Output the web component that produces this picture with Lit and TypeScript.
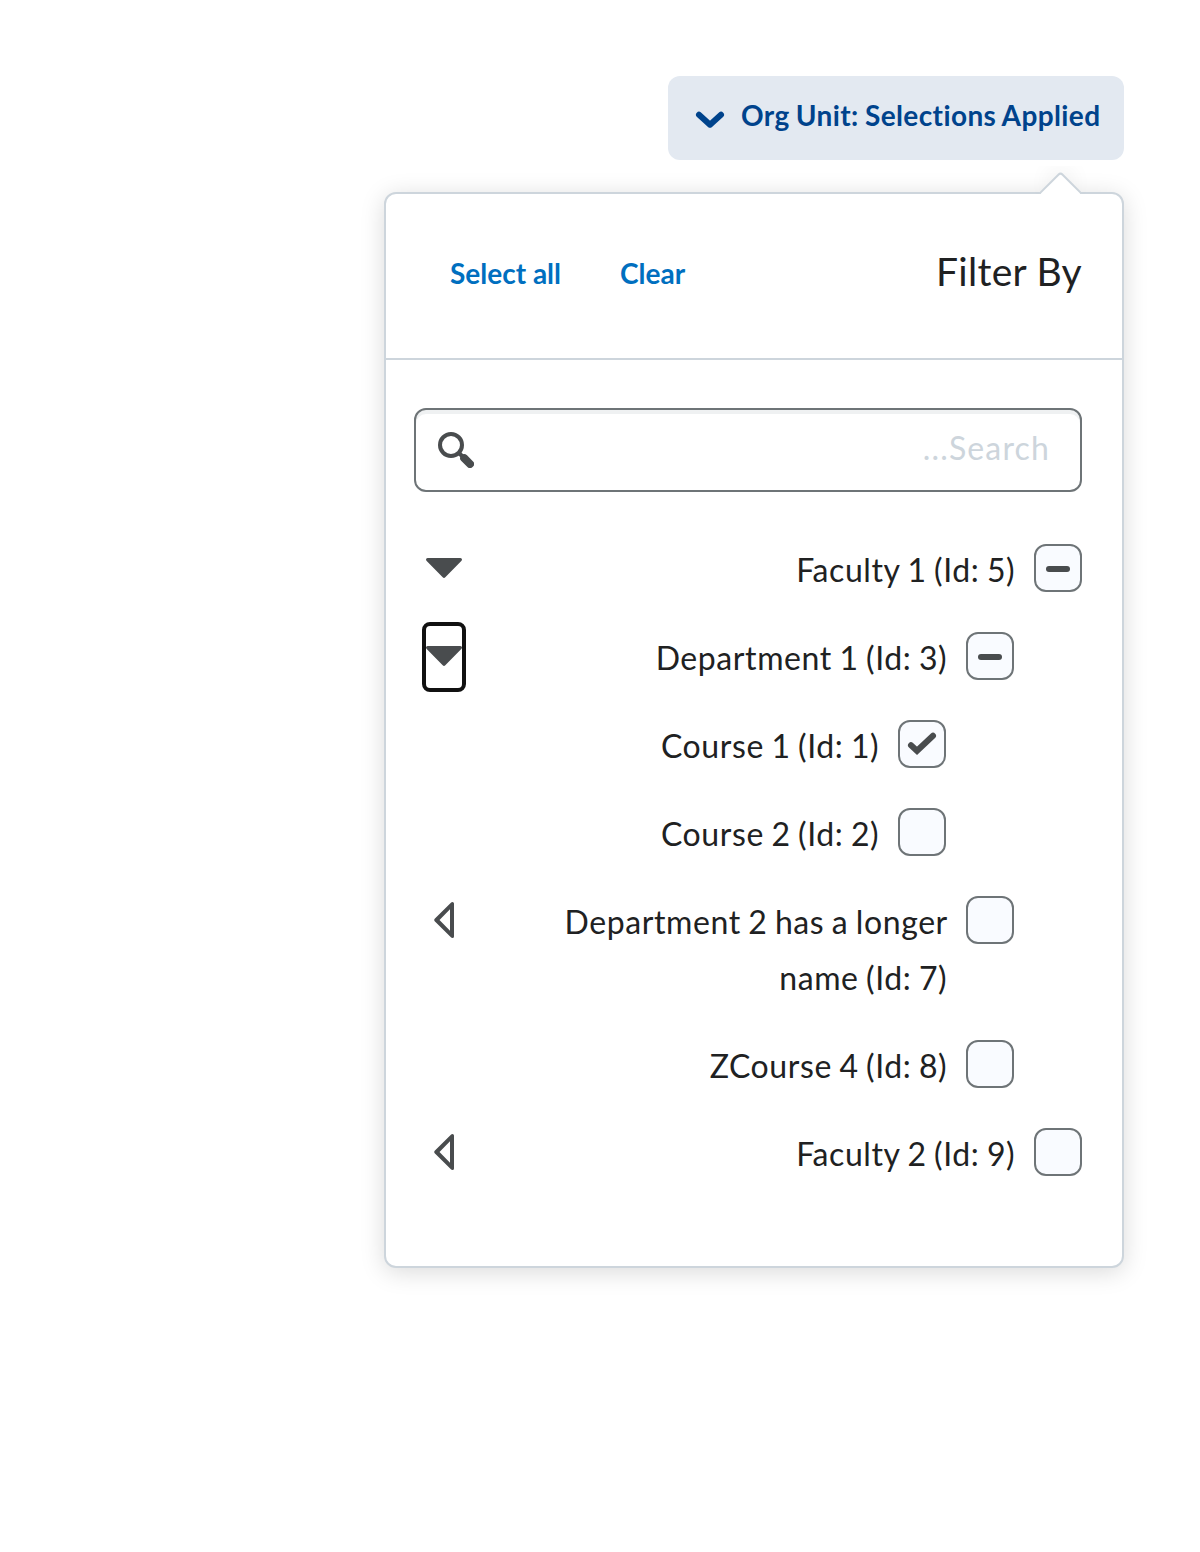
import { LitElement, html, css, svg, nothing } from 'lit';
import { customElement, property } from 'lit/decorators.js';
import { classMap } from 'lit/directives/class-map.js';

type CheckState = 'none' | 'some' | 'all';

interface TreeNode {
  name: string;
  level: number;
  check: CheckState;
  open?: boolean;
  focused?: boolean;
}

const NODES: TreeNode[] = [
  { name: 'Faculty 1 (Id: 5)', level: 0, check: 'some', open: true },
  { name: 'Department 1 (Id: 3)', level: 1, check: 'some', open: true, focused: true },
  { name: 'Course 1 (Id: 1)', level: 2, check: 'all' },
  { name: 'Course 2 (Id: 2)', level: 2, check: 'none' },
  { name: 'Department 2 has a longer name (Id: 7)', level: 1, check: 'none', open: false },
  { name: 'ZCourse 4 (Id: 8)', level: 1, check: 'none' },
  { name: 'Faculty 2 (Id: 9)', level: 0, check: 'none', open: false },
];

@customElement('tree-row')
class TreeRow extends LitElement {
  @property({ attribute: false }) node!: TreeNode;

  static styles = css`
    :host { display: block; }
    .row { display: flex; align-items: flex-start; }
    .level-1 { padding-inline-start: 68px; }
    .level-2 { padding-inline-start: 136px; }
    .box {
      box-sizing: border-box;
      flex: none;
      width: 48px;
      height: 48px;
      margin-top: 4px;
      border: 2px solid #6e7477;
      border-radius: 12px;
      background: #f9fbff;
    }
    .mark { display: block; width: 44px; height: 44px; }
    .name {
      flex: 1;
      padding-top: 2px;
      margin-bottom: -2px;
      padding-inline: 18.8px 20px;
      font-size: 32px;
      line-height: 56px;
      letter-spacing: 0.6px;
      word-spacing: -1.3px;
      color: #202122;
    }
    .toggle {
      display: flex;
      align-items: flex-start;
      flex: none;
      box-sizing: border-box;
      width: 36px;
      height: 62px;
      margin: -2px 0 -4px;
      padding: 12px 0 0;
      border: 0;
      border-radius: 4px;
      background: none;
    }
    .focused { outline: 4px solid #111; }
    .arrow { display: block; width: 36px; height: 36px; }
    .spacer { flex: none; width: 36px; }
  `;

  private mark(check: CheckState) {
    if (check === 'none') return nothing;
    const shape = check === 'some'
      ? svg`<path d="M13 23H31" stroke-width="6"/>`
      : svg`<path d="M11 23.3L17 28.8L33 13.8" stroke-width="6"/>`;
    return html`<svg class="mark" viewBox="0 0 44 44" fill="none" stroke="#494c4e" stroke-linecap="round">${shape}</svg>`;
  }

  render() {
    const { name, level, check, open, focused } = this.node;
    return html`
      <div class="row level-${level}">
        <div class="box" role="checkbox" aria-checked=${check === 'some' ? 'mixed' : String(check === 'all')}>${this.mark(check)}</div>
        <div class="name">${name}</div>
        ${open === undefined
          ? html`<span class="spacer"></span>`
          : html`<button class=${classMap({ toggle: true, focused: !!focused })}>
              <svg class="arrow" viewBox="0 0 36 36">
                ${open
                  ? svg`<path fill="#494c4e" d="M1.6 8H34.4Q36 8 36 9.6Q36 10.4 35.3 11.1L19.3 27.3Q18 28.5 16.7 27.3L.7 11.1Q0 10.4 0 9.6Q0 8 1.6 8Z"/>`
                  : svg`<path fill="#494c4e" fill-rule="evenodd" d="M28 1.6V34.4Q28 36 26.4 36Q25.6 36 24.9 35.3L8.7 19.3Q7.5 18 8.7 16.7L24.9 .7Q25.6 0 26.4 0Q28 0 28 1.6ZM24 7.3L13.5 18L24 28.7Z"/>`}
              </svg>
            </button>`}
      </div>`;
  }
}

@customElement('app-root')
class AppRoot extends LitElement {
  static styles = css`
    :host {
      display: block;
      box-sizing: border-box;
      height: 1552px;
      padding: 76px 76px 0 384px;
      background: #fff;
      font-family: Lato, sans-serif;
      direction: rtl;
    }
    button { font-family: inherit; }
    .opener {
      display: flex;
      align-items: center;
      justify-content: space-between;
      box-sizing: border-box;
      width: 456px;
      height: 84px;
      padding: 0 23.5px 0 24px;
      border: 0;
      border-radius: 12px;
      background: #e3e9f1;
      color: #00438c;
      font-size: 28px;
      font-weight: 700;
      letter-spacing: 0.4px;
      word-spacing: -1px;
    }
    .opener-text { padding-bottom: 6px; white-space: nowrap; }
    .chevron { width: 36px; height: 36px; margin-top: 4px; }
    .panel {
      position: relative;
      box-sizing: border-box;
      height: 1076px;
      margin-top: 32px;
      border: 2px solid #cdd5dc;
      border-radius: 12px;
      background: #fff;
      box-shadow: 0 4px 24px rgba(0, 0, 0, 0.15);
    }
    .pointer {
      position: absolute;
      top: -28px;
      right: 30px;
      width: 64px;
      height: 28px;
      overflow: hidden;
    }
    .pointer::before {
      content: '';
      position: absolute;
      box-sizing: border-box;
      top: 11.6px;
      left: 15.5px;
      width: 33px;
      height: 33px;
      border: 2px solid #cdd5dc;
      border-radius: 4px;
      background: #fff;
      box-shadow: -8px -8px 24px -10px rgba(0, 0, 0, 0.2);
      transform: rotate(45deg);
    }
    .header {
      display: flex;
      align-items: center;
      justify-content: space-between;
      box-sizing: border-box;
      height: 166px;
      padding: 0 40px 6px 64px;
      border-bottom: 2px solid #cdd5dc;
    }
    .title { padding-bottom: 4px; font-size: 39px; line-height: 48px; letter-spacing: 0.3px; color: #202122; }
    .actions { display: flex; gap: 59px; }
    .link {
      padding: 0;
      border: 0;
      background: none;
      color: #006fbf;
      font-size: 28px;
      line-height: 36px;
      font-weight: 700;
    }
    .body { padding: 48px 40px 0 28px; }
    .search {
      display: flex;
      align-items: center;
      justify-content: space-between;
      box-sizing: border-box;
      height: 84px;
      padding: 0 30px 0 22px;
      border: 2px solid #6e7477;
      border-radius: 12px;
      box-shadow: inset 0 4px 0 rgba(177, 185, 190, 0.2);
    }
    .placeholder { padding-bottom: 6px; font-size: 32px; letter-spacing: 1.15px; color: #cdd5dc; }
    .search-icon { width: 36px; height: 36px; }
    .tree { display: flex; flex-direction: column; gap: 32px; padding: 48px 0 0 12px; }
  `;

  render() {
    return html`
      <button class="opener">
        <span class="opener-text">Org Unit: Selections Applied</span>
        <svg class="chevron" viewBox="0 0 36 36" fill="none" stroke="#00438c" stroke-width="6" stroke-linecap="round" stroke-linejoin="round">
          <path d="M7 12.8L18 22.7L29 12.8"/>
        </svg>
      </button>
      <div class="panel">
        <div class="pointer"></div>
        <div class="header">
          <div class="title">Filter By</div>
          <div class="actions">
            <button class="link">Clear</button>
            <button class="link">Select all</button>
          </div>
        </div>
        <div class="body">
          <div class="search">
            <span class="placeholder">Search...</span>
            <svg class="search-icon" viewBox="0 0 36 36" fill="none" stroke="#494c4e">
              <circle cx="13" cy="13" r="11" stroke-width="4"/>
              <path d="M21 21L25 25" stroke-width="4"/>
              <path d="M26.2 26.2L32 32" stroke-width="8" stroke-linecap="round"/>
            </svg>
          </div>
          <div class="tree">
            ${NODES.map((node) => html`<tree-row .node=${node}></tree-row>`)}
          </div>
        </div>
      </div>`;
  }
}
